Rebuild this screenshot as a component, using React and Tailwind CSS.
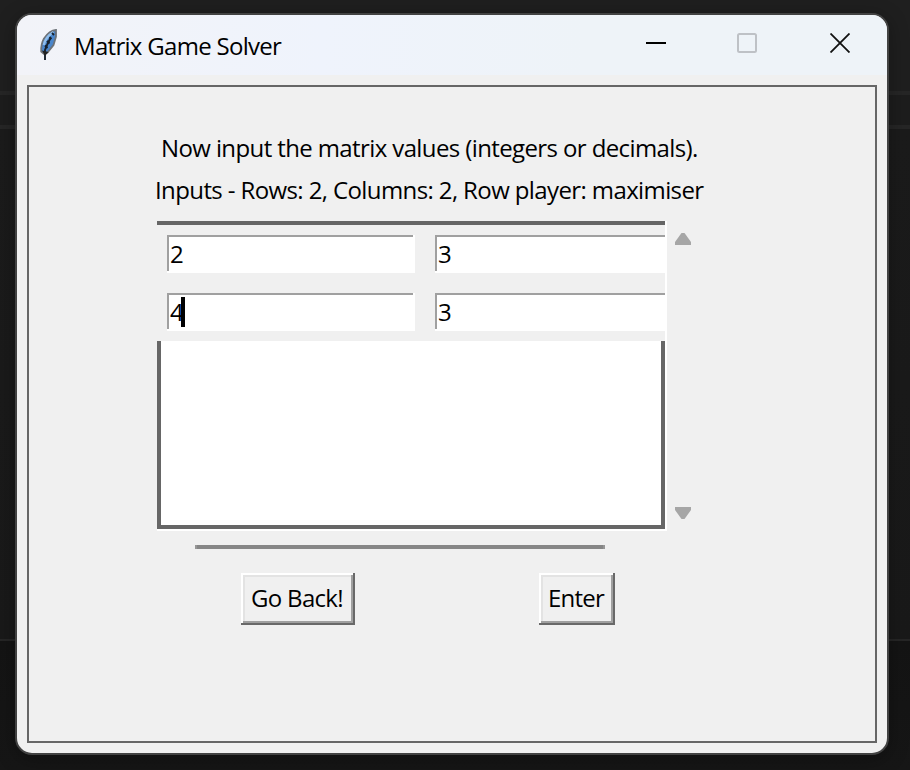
function Feather() {
  return (
    <svg className="h-[34px] w-[20px] shrink-0" viewBox="0 0 20 34">
      <path d="M17 2C12.5 2.5 8.5 5.5 5 10.500C2.500 15 2 19 2.200 23.500L5 26L8.500 24.500L14.500 17L17 8.500Z" fill="#4a86cc" stroke="#6d7278" strokeWidth="1.800" />
      <path d="M14.500 4C9.500 7 6 11.500 4.800 17" fill="none" stroke="#8fbdec" strokeWidth="2.400" />
      <path d="M11.500 10L8.500 16L6 22V32" fill="none" stroke="#17202b" strokeWidth="1.900" />
      <path d="M10.500 9l2 2M8 13l2.500 2.500M6 17.500l2.500 2.500M13 5l2 2" stroke="#17202b" strokeWidth="1.800" />
      <path d="M3 22.500L6 28L9.500 24" fill="#222" />
    </svg>
  );
}

function Entry({ value, focused, className = "w-[248px]" }) {
  return (
    <div className={`flex h-[38px] shrink-0 bg-white pr-[2px] pb-[2px] ${className}`}>
      <div className="flex grow items-center border-t-2 border-l-2 border-[#a0a0a0] pl-[1px]">
        <span className="w-[13px] leading-[30px]">{value}</span>
        {focused && <span className="-ml-[2px] h-[30px] w-[4px] shrink-0 bg-black" />}
      </div>
    </div>
  );
}

function Button({ children, className }) {
  return (
    <button className={`flex h-[52px] items-center justify-center bg-[#f0f0f0] pr-[2px] pb-[2px] whitespace-nowrap shadow-[inset_-2px_-2px_#696969,inset_2px_2px_#ffffff,inset_-4px_-4px_#a0a0a0,inset_4px_4px_#e3e3e3] ${className}`}>
      {children}
    </button>
  );
}

export default function App() {
  return (
    <div className="h-[770px] w-[910px] overflow-hidden bg-[linear-gradient(180deg,#1f1f1f_0px,#1f1f1f_91px,#262626_91px,#262626_95px,#1d1d1d_95px,#1d1d1d_125px,#262626_125px,#262626_129px,#1b1b1b_129px,#191919_639px,#262626_639px,#262626_641px,#141414_641px,#161616_770px)] pt-[13px] pl-[15px] font-['Open_Sans','Noto_Sans',sans-serif] text-[24px] text-black">
      <div className="flex h-[742px] w-[874px] flex-col overflow-hidden rounded-[17px] border-2 border-[#424242] bg-[#f0f0f0] shadow-[0_4px_20px_rgba(0,0,0,0.3)]">
        <header className="flex h-[60px] shrink-0 items-center bg-[linear-gradient(90deg,#f2f3f8_0%,#eff3fc_35%,#eef3f8_65%,#eef3f8_100%)] pl-[22px]">
          <Feather />
          <h1 className="mt-[2px] ml-[15px] w-[572px] text-[24px] leading-[30px] tracking-[-0.7px]">Matrix Game Solver</h1>
          <svg className="-mt-[4px] h-[20px] w-[20px]" viewBox="0 0 20 20"><path d="M0 10H20" stroke="#000" strokeWidth="2" /></svg>
          <svg className="-mt-[4px] ml-[71px] h-[20px] w-[20px]" viewBox="0 0 20 20"><rect x="1" y="1" width="18" height="18" rx="1.5" fill="none" stroke="#bec1c6" strokeWidth="2" /></svg>
          <svg className="-mt-[4px] ml-[73px] h-[20px] w-[20px]" viewBox="0 0 20 20"><path d="M.5 .5L19.5 19.5M19.5 .5L.5 19.5" stroke="#111" strokeWidth="1.8" /></svg>
        </header>
        <main className="mx-[10px] mt-[10px] flex h-[658px] flex-col border-2 border-[#666] pt-[46px] pl-[126px]">
          <p className="ml-[6px] h-[42px] leading-[30px] tracking-[-0.61px] whitespace-nowrap">Now input the matrix values (integers or decimals).</p>
          <p className="h-[46px] leading-[30px] tracking-[-0.61px] whitespace-nowrap">Inputs - Rows: 2, Columns: 2, Row player: maximiser</p>
          <div className="ml-[2px] flex h-[310px]">
            <div className="w-[510px] border-r-2 border-b-2 border-white">
              <div className="flex h-[308px] flex-col">
                <div className="h-[4px] bg-[#666]" />
                <div className="flex h-[116px] flex-col gap-[20px] overflow-hidden bg-[#f0f0f0] py-[10px] pl-[10px]">
                  <div className="flex gap-[20px]"><Entry value="2" /><Entry value="3" /></div>
                  <div className="flex gap-[20px]"><Entry value="4" focused /><Entry value="3" /></div>
                </div>
                <div className="grow border-4 border-t-0 border-[#666] bg-white" />
              </div>
            </div>
            <div className="flex w-[32px] flex-col items-center justify-between pt-[12px] pb-[12px]">
              <svg className="h-[12px] w-[16px]" viewBox="0 0 16 12"><path d="M6.500 0H9.500L16 9V12H0V9Z" fill="#a6a6a6" /></svg>
              <svg className="h-[12px] w-[16px]" viewBox="0 0 16 12"><path d="M6.500 12H9.500L16 3V0H0V3Z" fill="#a6a6a6" /></svg>
            </div>
          </div>
          <div className="mt-[14px] ml-[40px] h-[4px] w-[410px] border-x-2 border-[#969696] bg-[#868686]" />
          <div className="mt-[24px] ml-[86px] flex gap-[184px]">
            <Button className="w-[114px] tracking-[-0.7px]">Go Back!</Button>
            <Button className="w-[76px] tracking-[-0.8px]">Enter</Button>
          </div>
        </main>
      </div>
    </div>
  );
}
